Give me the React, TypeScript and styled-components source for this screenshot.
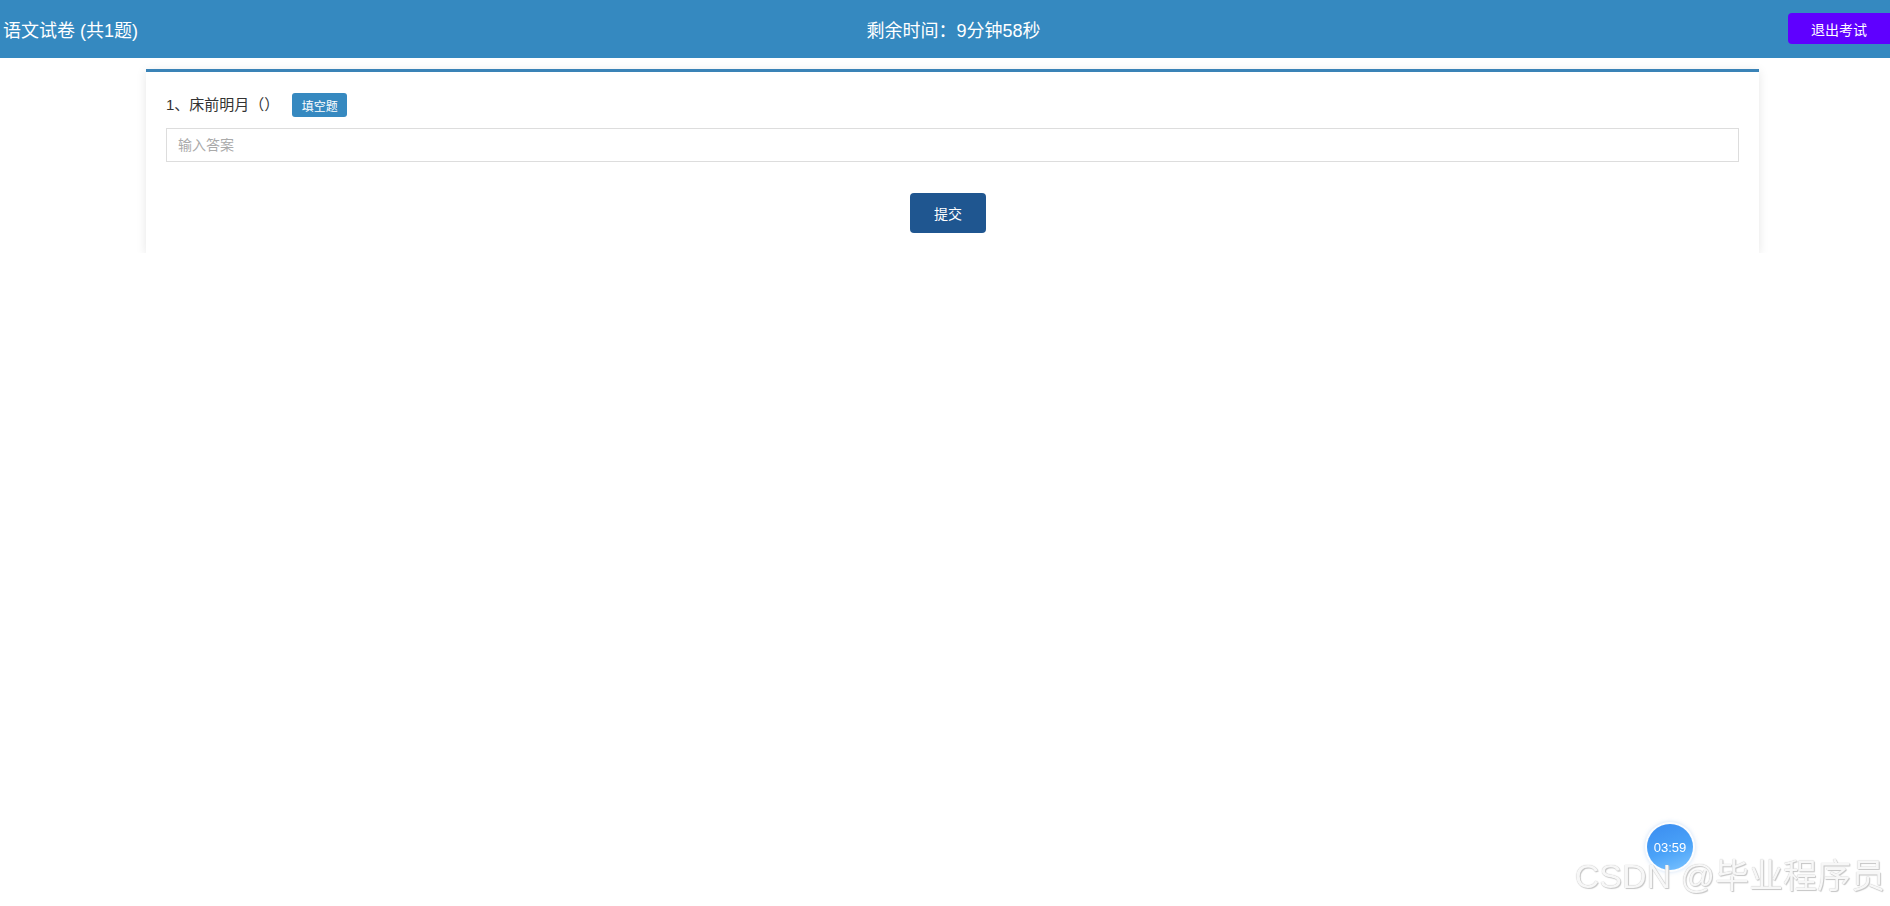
import { useState } from "react";
import styled, { createGlobalStyle } from "styled-components";

const GlobalStyle = createGlobalStyle`
  html, body {
    margin: 0;
    padding: 0;
    background: #fff;
    font-family: "Liberation Sans", "Noto Sans CJK SC", sans-serif;
    color: #333;
  }
  * { box-sizing: border-box; }
`;

const Header = styled.header`
  height: 58px;
  background: #3589c0;
  color: #fff;
  display: grid;
  grid-template-columns: 1fr auto 1fr;
  align-items: center;
  padding-left: 3px;
`;

const ExamTitle = styled.div`
  font-size: 18px;
  justify-self: start;
`;

const Timer = styled.div`
  font-size: 18px;
  margin-left: 14px;
`;

const ExitButton = styled.button`
  justify-self: end;
  align-self: start;
  margin-top: 13px;
  width: 102px;
  height: 31px;
  border: none;
  border-radius: 4px 0 0 4px;
  background: #5f00ff;
  color: #fff;
  font-family: inherit;
  font-size: 14px;
  cursor: pointer;
`;

const Main = styled.main`
  padding: 11px 131px 0 146px;
`;

const Card = styled.section`
  background: #fff;
  border-top: 3px solid #3a83b7;
  box-shadow: 0 2px 10px rgba(0, 0, 0, 0.1);
  padding: 21px 20px 20px;
  display: flex;
  flex-direction: column;
`;

const QuestionRow = styled.div`
  display: flex;
  align-items: center;
  height: 24px;
  font-size: 15px;
  color: #333;
`;

const QuestionText = styled.span`
  margin-top: -3px;
`;

const Tag = styled.span`
  margin-left: 13px;
  height: 24px;
  padding: 0 9.5px;
  border-radius: 3px;
  background: #3689c0;
  color: #fff;
  font-size: 12px;
  display: inline-flex;
  align-items: center;
`;

const AnswerInput = styled.input`
  margin-top: 11px;
  width: 100%;
  height: 34px;
  border: 1px solid #ddd;
  padding: 0 11px;
  font-family: inherit;
  font-size: 14px;
  color: #333;
  outline: none;
  &::placeholder { color: #aaa; }
`;

const Actions = styled.div`
  margin-top: 31px;
  display: flex;
  justify-content: center;
  padding-right: 9px;
`;

const SubmitButton = styled.button`
  width: 76px;
  height: 40px;
  border: none;
  border-radius: 4px;
  background: #1f5690;
  color: #fff;
  font-family: inherit;
  font-size: 14px;
  cursor: pointer;
`;

const FloatTimer = styled.div`
  position: fixed;
  right: 197px;
  bottom: 36px;
  width: 46px;
  height: 46px;
  border-radius: 50%;
  background: linear-gradient(160deg, #3a8cf0 0%, #4aa2f8 55%, #7cc4ff 100%);
  box-shadow: 0 0 0 2px rgba(255, 255, 255, 0.9), 0 0 4px 2px rgba(120, 170, 230, 0.35);
  color: #fff;
  font-size: 13px;
  display: flex;
  align-items: center;
  justify-content: center;
  z-index: 5;
`;

const Watermark = styled.div`
  position: fixed;
  right: 5px;
  bottom: 10px;
  font-family: "Liberation Sans", "Noto Sans CJK SC", sans-serif;
  font-size: 34px;
  line-height: 40px;
  color: #f7f7f7;
  text-shadow: 0 0 1px #b0b0b0, 1px 1px 1px #c8c8c8;
  pointer-events: none;
  z-index: 10;
`;

export default function App() {
  const [answer, setAnswer] = useState("");

  return (
    <>
      <GlobalStyle />
      <Header>
        <ExamTitle>语文试卷 (共1题)</ExamTitle>
        <Timer>剩余时间：9分钟58秒</Timer>
        <ExitButton>退出考试</ExitButton>
      </Header>
      <Main>
        <Card>
          <QuestionRow>
            <QuestionText>1、床前明月（）</QuestionText>
            <Tag>填空题</Tag>
          </QuestionRow>
          <AnswerInput
            placeholder="输入答案"
            value={answer}
            onChange={(e) => setAnswer(e.target.value)}
          />
          <Actions>
            <SubmitButton>提交</SubmitButton>
          </Actions>
        </Card>
      </Main>
      <FloatTimer>03:59</FloatTimer>
      <Watermark>CSDN @毕业程序员</Watermark>
    </>
  );
}
